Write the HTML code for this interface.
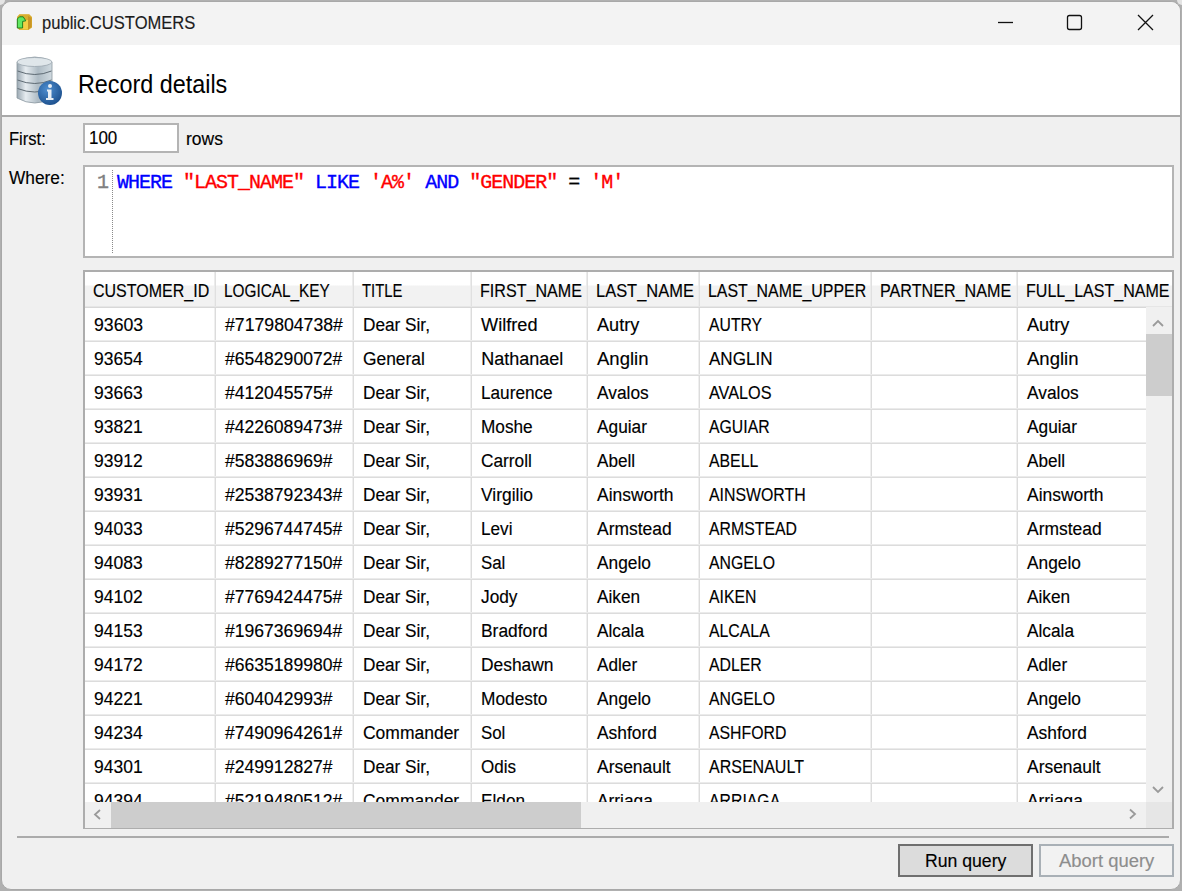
<!DOCTYPE html>
<html><head><meta charset="utf-8"><style>
html,body{margin:0;padding:0;width:1182px;height:891px;overflow:hidden;background:#b0b0b0;font-family:"Liberation Sans",sans-serif}
.r{position:absolute;box-sizing:content-box}
.t{position:absolute;white-space:pre;transform-origin:0 0;font-family:"Liberation Sans",sans-serif;-webkit-text-stroke:0.15px currentColor}
.mono{font-family:"Liberation Mono",monospace;font-size:20px;line-height:20px;letter-spacing:-1px;-webkit-text-stroke:0.35px currentColor}
#win{position:absolute;left:1px;top:1px;width:1178px;height:887px;border:1px solid #a8a8a8;border-radius:10px;background:#f0f0f0}
</style></head><body>
<div class="r" style="left:0;top:0;width:5px;height:5px;background:#e4e4e4;border-bottom-right-radius:5px"></div>
<div class="r" style="left:1177px;top:0;width:5px;height:5px;background:#e4e4e4;border-bottom-left-radius:5px"></div>
<div id="win"></div>
<div class="r" style="left:2px;top:2px;width:1178px;height:43px;background:#f3f3f3;border-radius:9px 9px 0 0"></div>
<div class="r" style="left:2px;top:45px;width:1178px;height:70px;background:#fff"></div>
<div class="r" style="left:2px;top:115px;width:1178px;height:2px;background:#a9a9a9"></div>
<div class="t" style="left:42px;top:14px;font-size:18px;line-height:18px;transform:scaleX(0.9200);color:#1b1b1b;">public.CUSTOMERS</div>
<svg class="r" style="left:990px;top:5px" width="180" height="35" viewBox="990 5 180 35"><line x1="998" y1="22.5" x2="1013" y2="22.5" stroke="#111" stroke-width="1.3"/><rect x="1067.5" y="15.5" width="14" height="14" rx="2" fill="none" stroke="#111" stroke-width="1.3"/><path d="M1138 15 L1153 30 M1153 15 L1138 30" stroke="#111" stroke-width="1.3"/></svg>
<svg class="r" style="left:0px;top:0px" width="40" height="40" viewBox="0 0 40 40"><path d="M19.5 14 L29 14 L32 17 L32 27.5 L28.5 30 L19.5 30 L17 27.5 L17 17 Z" fill="#d9ad2e"/><path d="M22 20 L28 20 L28 29.5 L20 29.5 Z" fill="#f3cf45"/><path d="M28 16 L31.5 18 L31.5 27 L28 29.5 Z" fill="#c99524"/><path d="M17.3 19 L19.5 16.8 L23.2 16.8 L25.8 20.8 L22.6 21.4 L22.6 28 L17.3 28 Z" fill="#62e862" stroke="#16761a" stroke-width="0.9" stroke-linejoin="miter"/><path d="M19.5 14.6 L28.5 14.6" stroke="#f0d890" stroke-width="0.8" stroke-dasharray="1 1"/></svg>
<svg class="r" style="left:14px;top:55px" width="52" height="52" viewBox="14 55 52 52">
<defs><linearGradient id="cyl" x1="0" x2="1" y1="0" y2="0">
<stop offset="0" stop-color="#9aa8b2"/><stop offset="0.25" stop-color="#e6ecf0"/><stop offset="0.6" stop-color="#aebbc4"/><stop offset="1" stop-color="#d0dae0"/></linearGradient>
<radialGradient id="info" cx="0.4" cy="0.35" r="0.7"><stop offset="0" stop-color="#4e8ed0"/><stop offset="1" stop-color="#1c4f8c"/></radialGradient></defs>
<path d="M17 62 Q35 52 52 62 L52 98 Q35 108 17 98 Z" fill="url(#cyl)" stroke="#8a97a0" stroke-width="0.8"/>
<ellipse cx="34.5" cy="62" rx="17.5" ry="4.5" fill="#dfe6ea" stroke="#9aa6ae" stroke-width="0.8"/>
<path d="M17.5 71 Q35 78 51.5 71" fill="none" stroke="#5f6b74" stroke-width="1"/>
<path d="M17.5 80 Q35 87 51.5 80" fill="none" stroke="#5f6b74" stroke-width="1"/>
<path d="M17.5 88.5 Q35 95.5 51.5 88.5" fill="none" stroke="#5f6b74" stroke-width="1"/>
<circle cx="50" cy="93" r="12" fill="url(#info)"/>
<circle cx="50" cy="86" r="2" fill="#e8eef4"/>
<path d="M47 89.5 H51.5 V98 H53.5 V100 H46 V98 H48 V91.5 H47 Z" fill="#e8eef4"/>
</svg>
<div class="t" style="left:77.5px;top:72px;font-size:25px;line-height:25px;transform:scaleX(0.9342);color:#000;-webkit-text-stroke:0">Record details</div>
<div class="t" style="left:9px;top:130px;font-size:18px;line-height:18px;transform:scaleX(0.9188);color:#000;">First:</div>
<div class="r" style="left:83px;top:123px;width:92px;height:26px;border:2px solid #b4b4b4;background:#fff"></div>
<div class="t" style="left:89px;top:129px;font-size:18px;line-height:18px;transform:scaleX(0.9414);color:#000;">100</div>
<div class="t" style="left:186px;top:130px;font-size:18px;line-height:18px;transform:scaleX(0.9703);color:#000;">rows</div>
<div class="t" style="left:9px;top:169px;font-size:18px;line-height:18px;transform:scaleX(0.9605);color:#000;">Where:</div>
<div class="r" style="left:83px;top:165px;width:1087px;height:89px;border:2px solid #b4b4b4;background:#fff"></div>
<div class="r" style="left:112px;top:170px;width:0;height:83px;border-left:1px dotted #8a8a8a"></div>
<div class="t mono" style="left:97px;top:173px;color:#808080">1</div>
<div class="t mono" style="left:117px;top:173px"><span style="color:#0000ff">WHERE</span><span style="color:#000">&nbsp;</span><span style="color:#ff0000">"LAST_NAME"</span><span style="color:#000">&nbsp;</span><span style="color:#0000ff">LIKE</span><span style="color:#000">&nbsp;</span><span style="color:#ff0000">'A%'</span><span style="color:#000">&nbsp;</span><span style="color:#0000ff">AND</span><span style="color:#000">&nbsp;</span><span style="color:#ff0000">"GENDER"</span><span style="color:#000">&nbsp;</span><span style="color:#000">=</span><span style="color:#000">&nbsp;</span><span style="color:#ff0000">'M'</span></div>
<div class="r" style="left:83px;top:270px;width:1087px;height:555px;border:2px solid #adadad;background:#fff;overflow:hidden"></div>
<div class="r" style="left:85px;top:272px;width:1087px;height:34px;background:linear-gradient(#ffffff 0,#ffffff 13px,#f2f2f2 14px,#f2f2f2 100%)"></div>
<div class="r" style="left:85px;top:306px;width:1087px;height:1px;background:#e6e6e6"></div>
<div class="r" style="left:85px;top:307px;width:1087px;height:1px;background:#d8d8d8"></div>
<div class="r" style="left:214px;top:272px;width:1px;height:34px;background:#ececec"></div>
<div class="r" style="left:215px;top:272px;width:1px;height:34px;background:#e0e0e0"></div>
<div class="r" style="left:214px;top:308px;width:1px;height:494px;background:#efefef"></div>
<div class="r" style="left:215px;top:308px;width:1px;height:494px;background:#dcdcdc"></div>
<div class="r" style="left:352px;top:272px;width:1px;height:34px;background:#ececec"></div>
<div class="r" style="left:353px;top:272px;width:1px;height:34px;background:#e0e0e0"></div>
<div class="r" style="left:352px;top:308px;width:1px;height:494px;background:#efefef"></div>
<div class="r" style="left:353px;top:308px;width:1px;height:494px;background:#dcdcdc"></div>
<div class="r" style="left:470px;top:272px;width:1px;height:34px;background:#ececec"></div>
<div class="r" style="left:471px;top:272px;width:1px;height:34px;background:#e0e0e0"></div>
<div class="r" style="left:470px;top:308px;width:1px;height:494px;background:#efefef"></div>
<div class="r" style="left:471px;top:308px;width:1px;height:494px;background:#dcdcdc"></div>
<div class="r" style="left:586px;top:272px;width:1px;height:34px;background:#ececec"></div>
<div class="r" style="left:587px;top:272px;width:1px;height:34px;background:#e0e0e0"></div>
<div class="r" style="left:586px;top:308px;width:1px;height:494px;background:#efefef"></div>
<div class="r" style="left:587px;top:308px;width:1px;height:494px;background:#dcdcdc"></div>
<div class="r" style="left:698px;top:272px;width:1px;height:34px;background:#ececec"></div>
<div class="r" style="left:699px;top:272px;width:1px;height:34px;background:#e0e0e0"></div>
<div class="r" style="left:698px;top:308px;width:1px;height:494px;background:#efefef"></div>
<div class="r" style="left:699px;top:308px;width:1px;height:494px;background:#dcdcdc"></div>
<div class="r" style="left:870px;top:272px;width:1px;height:34px;background:#ececec"></div>
<div class="r" style="left:871px;top:272px;width:1px;height:34px;background:#e0e0e0"></div>
<div class="r" style="left:870px;top:308px;width:1px;height:494px;background:#efefef"></div>
<div class="r" style="left:871px;top:308px;width:1px;height:494px;background:#dcdcdc"></div>
<div class="r" style="left:1016px;top:272px;width:1px;height:34px;background:#ececec"></div>
<div class="r" style="left:1017px;top:272px;width:1px;height:34px;background:#e0e0e0"></div>
<div class="r" style="left:1016px;top:308px;width:1px;height:494px;background:#efefef"></div>
<div class="r" style="left:1017px;top:308px;width:1px;height:494px;background:#dcdcdc"></div>
<div class="r" style="left:85px;top:340px;width:1061px;height:1px;background:#ebebeb"></div>
<div class="r" style="left:85px;top:341px;width:1061px;height:1px;background:#dcdcdc"></div>
<div class="r" style="left:85px;top:374px;width:1061px;height:1px;background:#ebebeb"></div>
<div class="r" style="left:85px;top:375px;width:1061px;height:1px;background:#dcdcdc"></div>
<div class="r" style="left:85px;top:408px;width:1061px;height:1px;background:#ebebeb"></div>
<div class="r" style="left:85px;top:409px;width:1061px;height:1px;background:#dcdcdc"></div>
<div class="r" style="left:85px;top:442px;width:1061px;height:1px;background:#ebebeb"></div>
<div class="r" style="left:85px;top:443px;width:1061px;height:1px;background:#dcdcdc"></div>
<div class="r" style="left:85px;top:476px;width:1061px;height:1px;background:#ebebeb"></div>
<div class="r" style="left:85px;top:477px;width:1061px;height:1px;background:#dcdcdc"></div>
<div class="r" style="left:85px;top:510px;width:1061px;height:1px;background:#ebebeb"></div>
<div class="r" style="left:85px;top:511px;width:1061px;height:1px;background:#dcdcdc"></div>
<div class="r" style="left:85px;top:544px;width:1061px;height:1px;background:#ebebeb"></div>
<div class="r" style="left:85px;top:545px;width:1061px;height:1px;background:#dcdcdc"></div>
<div class="r" style="left:85px;top:578px;width:1061px;height:1px;background:#ebebeb"></div>
<div class="r" style="left:85px;top:579px;width:1061px;height:1px;background:#dcdcdc"></div>
<div class="r" style="left:85px;top:612px;width:1061px;height:1px;background:#ebebeb"></div>
<div class="r" style="left:85px;top:613px;width:1061px;height:1px;background:#dcdcdc"></div>
<div class="r" style="left:85px;top:646px;width:1061px;height:1px;background:#ebebeb"></div>
<div class="r" style="left:85px;top:647px;width:1061px;height:1px;background:#dcdcdc"></div>
<div class="r" style="left:85px;top:680px;width:1061px;height:1px;background:#ebebeb"></div>
<div class="r" style="left:85px;top:681px;width:1061px;height:1px;background:#dcdcdc"></div>
<div class="r" style="left:85px;top:714px;width:1061px;height:1px;background:#ebebeb"></div>
<div class="r" style="left:85px;top:715px;width:1061px;height:1px;background:#dcdcdc"></div>
<div class="r" style="left:85px;top:748px;width:1061px;height:1px;background:#ebebeb"></div>
<div class="r" style="left:85px;top:749px;width:1061px;height:1px;background:#dcdcdc"></div>
<div class="r" style="left:85px;top:782px;width:1061px;height:1px;background:#ebebeb"></div>
<div class="r" style="left:85px;top:783px;width:1061px;height:1px;background:#dcdcdc"></div>
<div class="r" style="left:85px;top:272px;width:1087px;height:34px;overflow:hidden">
<div class="t" style="left:8px;top:10px;font-size:18px;line-height:18px;transform:scaleX(0.8891);color:#000;">CUSTOMER_ID</div>
<div class="t" style="left:139px;top:10px;font-size:18px;line-height:18px;transform:scaleX(0.8528);color:#000;">LOGICAL_KEY</div>
<div class="t" style="left:277px;top:10px;font-size:18px;line-height:18px;transform:scaleX(0.8250);color:#000;">TITLE</div>
<div class="t" style="left:395px;top:10px;font-size:18px;line-height:18px;transform:scaleX(0.8946);color:#000;">FIRST_NAME</div>
<div class="t" style="left:511px;top:10px;font-size:18px;line-height:18px;transform:scaleX(0.9143);color:#000;">LAST_NAME</div>
<div class="t" style="left:623px;top:10px;font-size:18px;line-height:18px;transform:scaleX(0.8831);color:#000;">LAST_NAME_UPPER</div>
<div class="t" style="left:795px;top:10px;font-size:18px;line-height:18px;transform:scaleX(0.8966);color:#000;">PARTNER_NAME</div>
<div class="t" style="left:941px;top:10px;font-size:18px;line-height:18px;transform:scaleX(0.8912);color:#000;">FULL_LAST_NAME</div>
</div>
<div class="r" style="left:85px;top:307px;width:1061px;height:495px;overflow:hidden">
<div class="t" style="left:8.5px;top:9px;font-size:18px;line-height:18px;transform:scaleX(0.9813);color:#000;">93603</div>
<div class="t" style="left:140.2px;top:9px;font-size:18px;line-height:18px;transform:scaleX(0.9817);color:#000;">#7179804738#</div>
<div class="t" style="left:278.2px;top:9px;font-size:18px;line-height:18px;transform:scaleX(0.9559);color:#000;">Dear Sir,</div>
<div class="t" style="left:396.2px;top:9px;font-size:18px;line-height:18px;transform:scaleX(1.0091);color:#000;">Wilfred</div>
<div class="t" style="left:512.2px;top:9px;font-size:18px;line-height:18px;transform:scaleX(1.0071);color:#000;">Autry</div>
<div class="t" style="left:624.2px;top:9px;font-size:18px;line-height:18px;transform:scaleX(0.8750);color:#000;">AUTRY</div>
<div class="t" style="left:942.2px;top:9px;font-size:18px;line-height:18px;transform:scaleX(1.0071);color:#000;">Autry</div>
<div class="t" style="left:8.5px;top:43px;font-size:18px;line-height:18px;transform:scaleX(0.9710);color:#000;">93654</div>
<div class="t" style="left:140.2px;top:43px;font-size:18px;line-height:18px;transform:scaleX(0.9758);color:#000;">#6548290072#</div>
<div class="t" style="left:278.2px;top:43px;font-size:18px;line-height:18px;transform:scaleX(0.9661);color:#000;">General</div>
<div class="t" style="left:396.2px;top:43px;font-size:18px;line-height:18px;transform:scaleX(1.0000);color:#000;">Nathanael</div>
<div class="t" style="left:512.2px;top:43px;font-size:18px;line-height:18px;transform:scaleX(1.0286);color:#000;">Anglin</div>
<div class="t" style="left:624.2px;top:43px;font-size:18px;line-height:18px;transform:scaleX(0.9470);color:#000;">ANGLIN</div>
<div class="t" style="left:942.2px;top:43px;font-size:18px;line-height:18px;transform:scaleX(1.0286);color:#000;">Anglin</div>
<div class="t" style="left:8.5px;top:77px;font-size:18px;line-height:18px;transform:scaleX(0.9710);color:#000;">93663</div>
<div class="t" style="left:140.2px;top:77px;font-size:18px;line-height:18px;transform:scaleX(0.9763);color:#000;">#412045575#</div>
<div class="t" style="left:278.2px;top:77px;font-size:18px;line-height:18px;transform:scaleX(0.9559);color:#000;">Dear Sir,</div>
<div class="t" style="left:396.2px;top:77px;font-size:18px;line-height:18px;transform:scaleX(0.9548);color:#000;">Laurence</div>
<div class="t" style="left:512.2px;top:77px;font-size:18px;line-height:18px;transform:scaleX(0.9623);color:#000;">Avalos</div>
<div class="t" style="left:624.2px;top:77px;font-size:18px;line-height:18px;transform:scaleX(0.9014);color:#000;">AVALOS</div>
<div class="t" style="left:942.2px;top:77px;font-size:18px;line-height:18px;transform:scaleX(0.9623);color:#000;">Avalos</div>
<div class="t" style="left:8.5px;top:111px;font-size:18px;line-height:18px;transform:scaleX(0.9710);color:#000;">93821</div>
<div class="t" style="left:140.2px;top:111px;font-size:18px;line-height:18px;transform:scaleX(0.9758);color:#000;">#4226089473#</div>
<div class="t" style="left:278.2px;top:111px;font-size:18px;line-height:18px;transform:scaleX(0.9559);color:#000;">Dear Sir,</div>
<div class="t" style="left:396.2px;top:111px;font-size:18px;line-height:18px;transform:scaleX(0.9556);color:#000;">Moshe</div>
<div class="t" style="left:512.2px;top:111px;font-size:18px;line-height:18px;transform:scaleX(0.9606);color:#000;">Aguiar</div>
<div class="t" style="left:624.2px;top:111px;font-size:18px;line-height:18px;transform:scaleX(0.8790);color:#000;">AGUIAR</div>
<div class="t" style="left:942.2px;top:111px;font-size:18px;line-height:18px;transform:scaleX(0.9606);color:#000;">Aguiar</div>
<div class="t" style="left:8.5px;top:145px;font-size:18px;line-height:18px;transform:scaleX(0.9710);color:#000;">93912</div>
<div class="t" style="left:140.2px;top:145px;font-size:18px;line-height:18px;transform:scaleX(0.9763);color:#000;">#583886969#</div>
<div class="t" style="left:278.2px;top:145px;font-size:18px;line-height:18px;transform:scaleX(0.9559);color:#000;">Dear Sir,</div>
<div class="t" style="left:396.2px;top:145px;font-size:18px;line-height:18px;transform:scaleX(0.9590);color:#000;">Carroll</div>
<div class="t" style="left:512.2px;top:145px;font-size:18px;line-height:18px;transform:scaleX(0.9532);color:#000;">Abell</div>
<div class="t" style="left:624.2px;top:145px;font-size:18px;line-height:18px;transform:scaleX(0.8790);color:#000;">ABELL</div>
<div class="t" style="left:942.2px;top:145px;font-size:18px;line-height:18px;transform:scaleX(0.9532);color:#000;">Abell</div>
<div class="t" style="left:8.5px;top:179px;font-size:18px;line-height:18px;transform:scaleX(0.9710);color:#000;">93931</div>
<div class="t" style="left:140.2px;top:179px;font-size:18px;line-height:18px;transform:scaleX(0.9758);color:#000;">#2538792343#</div>
<div class="t" style="left:278.2px;top:179px;font-size:18px;line-height:18px;transform:scaleX(0.9559);color:#000;">Dear Sir,</div>
<div class="t" style="left:396.2px;top:179px;font-size:18px;line-height:18px;transform:scaleX(0.9673);color:#000;">Virgilio</div>
<div class="t" style="left:512.2px;top:179px;font-size:18px;line-height:18px;transform:scaleX(0.9689);color:#000;">Ainsworth</div>
<div class="t" style="left:624.2px;top:179px;font-size:18px;line-height:18px;transform:scaleX(0.8816);color:#000;">AINSWORTH</div>
<div class="t" style="left:942.2px;top:179px;font-size:18px;line-height:18px;transform:scaleX(0.9689);color:#000;">Ainsworth</div>
<div class="t" style="left:8.5px;top:213px;font-size:18px;line-height:18px;transform:scaleX(0.9710);color:#000;">94033</div>
<div class="t" style="left:140.2px;top:213px;font-size:18px;line-height:18px;transform:scaleX(0.9758);color:#000;">#5296744745#</div>
<div class="t" style="left:278.2px;top:213px;font-size:18px;line-height:18px;transform:scaleX(0.9559);color:#000;">Dear Sir,</div>
<div class="t" style="left:396.2px;top:213px;font-size:18px;line-height:18px;transform:scaleX(0.9529);color:#000;">Levi</div>
<div class="t" style="left:512.2px;top:213px;font-size:18px;line-height:18px;transform:scaleX(0.9685);color:#000;">Armstead</div>
<div class="t" style="left:624.2px;top:213px;font-size:18px;line-height:18px;transform:scaleX(0.8790);color:#000;">ARMSTEAD</div>
<div class="t" style="left:942.2px;top:213px;font-size:18px;line-height:18px;transform:scaleX(0.9685);color:#000;">Armstead</div>
<div class="t" style="left:8.5px;top:247px;font-size:18px;line-height:18px;transform:scaleX(0.9710);color:#000;">94083</div>
<div class="t" style="left:140.2px;top:247px;font-size:18px;line-height:18px;transform:scaleX(0.9758);color:#000;">#8289277150#</div>
<div class="t" style="left:278.2px;top:247px;font-size:18px;line-height:18px;transform:scaleX(0.9559);color:#000;">Dear Sir,</div>
<div class="t" style="left:396.2px;top:247px;font-size:18px;line-height:18px;transform:scaleX(0.9361);color:#000;">Sal</div>
<div class="t" style="left:512.2px;top:247px;font-size:18px;line-height:18px;transform:scaleX(0.9623);color:#000;">Angelo</div>
<div class="t" style="left:624.2px;top:247px;font-size:18px;line-height:18px;transform:scaleX(0.8790);color:#000;">ANGELO</div>
<div class="t" style="left:942.2px;top:247px;font-size:18px;line-height:18px;transform:scaleX(0.9623);color:#000;">Angelo</div>
<div class="t" style="left:8.5px;top:281px;font-size:18px;line-height:18px;transform:scaleX(0.9710);color:#000;">94102</div>
<div class="t" style="left:140.2px;top:281px;font-size:18px;line-height:18px;transform:scaleX(0.9758);color:#000;">#7769424475#</div>
<div class="t" style="left:278.2px;top:281px;font-size:18px;line-height:18px;transform:scaleX(0.9559);color:#000;">Dear Sir,</div>
<div class="t" style="left:396.2px;top:281px;font-size:18px;line-height:18px;transform:scaleX(0.9599);color:#000;">Jody</div>
<div class="t" style="left:512.2px;top:281px;font-size:18px;line-height:18px;transform:scaleX(0.9568);color:#000;">Aiken</div>
<div class="t" style="left:624.2px;top:281px;font-size:18px;line-height:18px;transform:scaleX(0.8790);color:#000;">AIKEN</div>
<div class="t" style="left:942.2px;top:281px;font-size:18px;line-height:18px;transform:scaleX(0.9568);color:#000;">Aiken</div>
<div class="t" style="left:8.5px;top:315px;font-size:18px;line-height:18px;transform:scaleX(0.9710);color:#000;">94153</div>
<div class="t" style="left:140.2px;top:315px;font-size:18px;line-height:18px;transform:scaleX(0.9758);color:#000;">#1967369694#</div>
<div class="t" style="left:278.2px;top:315px;font-size:18px;line-height:18px;transform:scaleX(0.9559);color:#000;">Dear Sir,</div>
<div class="t" style="left:396.2px;top:315px;font-size:18px;line-height:18px;transform:scaleX(0.9666);color:#000;">Bradford</div>
<div class="t" style="left:512.2px;top:315px;font-size:18px;line-height:18px;transform:scaleX(0.9591);color:#000;">Alcala</div>
<div class="t" style="left:624.2px;top:315px;font-size:18px;line-height:18px;transform:scaleX(0.8790);color:#000;">ALCALA</div>
<div class="t" style="left:942.2px;top:315px;font-size:18px;line-height:18px;transform:scaleX(0.9591);color:#000;">Alcala</div>
<div class="t" style="left:8.5px;top:349px;font-size:18px;line-height:18px;transform:scaleX(0.9710);color:#000;">94172</div>
<div class="t" style="left:140.2px;top:349px;font-size:18px;line-height:18px;transform:scaleX(0.9758);color:#000;">#6635189980#</div>
<div class="t" style="left:278.2px;top:349px;font-size:18px;line-height:18px;transform:scaleX(0.9559);color:#000;">Dear Sir,</div>
<div class="t" style="left:396.2px;top:349px;font-size:18px;line-height:18px;transform:scaleX(0.9666);color:#000;">Deshawn</div>
<div class="t" style="left:512.2px;top:349px;font-size:18px;line-height:18px;transform:scaleX(0.9547);color:#000;">Adler</div>
<div class="t" style="left:624.2px;top:349px;font-size:18px;line-height:18px;transform:scaleX(0.8790);color:#000;">ADLER</div>
<div class="t" style="left:942.2px;top:349px;font-size:18px;line-height:18px;transform:scaleX(0.9547);color:#000;">Adler</div>
<div class="t" style="left:8.5px;top:383px;font-size:18px;line-height:18px;transform:scaleX(0.9710);color:#000;">94221</div>
<div class="t" style="left:140.2px;top:383px;font-size:18px;line-height:18px;transform:scaleX(0.9763);color:#000;">#604042993#</div>
<div class="t" style="left:278.2px;top:383px;font-size:18px;line-height:18px;transform:scaleX(0.9559);color:#000;">Dear Sir,</div>
<div class="t" style="left:396.2px;top:383px;font-size:18px;line-height:18px;transform:scaleX(0.9620);color:#000;">Modesto</div>
<div class="t" style="left:512.2px;top:383px;font-size:18px;line-height:18px;transform:scaleX(0.9623);color:#000;">Angelo</div>
<div class="t" style="left:624.2px;top:383px;font-size:18px;line-height:18px;transform:scaleX(0.8790);color:#000;">ANGELO</div>
<div class="t" style="left:942.2px;top:383px;font-size:18px;line-height:18px;transform:scaleX(0.9623);color:#000;">Angelo</div>
<div class="t" style="left:8.5px;top:417px;font-size:18px;line-height:18px;transform:scaleX(0.9710);color:#000;">94234</div>
<div class="t" style="left:140.2px;top:417px;font-size:18px;line-height:18px;transform:scaleX(0.9758);color:#000;">#7490964261#</div>
<div class="t" style="left:278.2px;top:417px;font-size:18px;line-height:18px;transform:scaleX(0.9711);color:#000;">Commander</div>
<div class="t" style="left:396.2px;top:417px;font-size:18px;line-height:18px;transform:scaleX(0.9361);color:#000;">Sol</div>
<div class="t" style="left:512.2px;top:417px;font-size:18px;line-height:18px;transform:scaleX(0.9645);color:#000;">Ashford</div>
<div class="t" style="left:624.2px;top:417px;font-size:18px;line-height:18px;transform:scaleX(0.8790);color:#000;">ASHFORD</div>
<div class="t" style="left:942.2px;top:417px;font-size:18px;line-height:18px;transform:scaleX(0.9645);color:#000;">Ashford</div>
<div class="t" style="left:8.5px;top:451px;font-size:18px;line-height:18px;transform:scaleX(0.9710);color:#000;">94301</div>
<div class="t" style="left:140.2px;top:451px;font-size:18px;line-height:18px;transform:scaleX(0.9763);color:#000;">#249912827#</div>
<div class="t" style="left:278.2px;top:451px;font-size:18px;line-height:18px;transform:scaleX(0.9559);color:#000;">Dear Sir,</div>
<div class="t" style="left:396.2px;top:451px;font-size:18px;line-height:18px;transform:scaleX(0.9449);color:#000;">Odis</div>
<div class="t" style="left:512.2px;top:451px;font-size:18px;line-height:18px;transform:scaleX(0.9683);color:#000;">Arsenault</div>
<div class="t" style="left:624.2px;top:451px;font-size:18px;line-height:18px;transform:scaleX(0.8899);color:#000;">ARSENAULT</div>
<div class="t" style="left:942.2px;top:451px;font-size:18px;line-height:18px;transform:scaleX(0.9683);color:#000;">Arsenault</div>
<div class="t" style="left:8.5px;top:485px;font-size:18px;line-height:18px;transform:scaleX(0.9710);color:#000;">94394</div>
<div class="t" style="left:140.2px;top:485px;font-size:18px;line-height:18px;transform:scaleX(0.9758);color:#000;">#5219480512#</div>
<div class="t" style="left:278.2px;top:485px;font-size:18px;line-height:18px;transform:scaleX(0.9711);color:#000;">Commander</div>
<div class="t" style="left:396.2px;top:485px;font-size:18px;line-height:18px;transform:scaleX(0.9574);color:#000;">Eldon</div>
<div class="t" style="left:512.2px;top:485px;font-size:18px;line-height:18px;transform:scaleX(0.9631);color:#000;">Arriaga</div>
<div class="t" style="left:624.2px;top:485px;font-size:18px;line-height:18px;transform:scaleX(0.8790);color:#000;">ARRIAGA</div>
<div class="t" style="left:942.2px;top:485px;font-size:18px;line-height:18px;transform:scaleX(0.9631);color:#000;">Arriaga</div>
</div>
<div class="r" style="left:1146px;top:307px;width:26px;height:495px;background:#f0f0f0"></div>
<div class="r" style="left:1146px;top:334px;width:26px;height:62px;background:#cdcdcd"></div>
<svg class="r" style="left:1146px;top:307px" width="26" height="495"><path d="M1153 19 L1158 14 L1163 19" transform="translate(-1146,0)" fill="none" stroke="#9a9a9a" stroke-width="1.8"/><path d="M7 480 L12 485 L17 480" fill="none" stroke="#9a9a9a" stroke-width="1.8"/></svg>
<div class="r" style="left:85px;top:802px;width:1061px;height:26px;background:#f0f0f0"></div>
<div class="r" style="left:111px;top:802px;width:470px;height:26px;background:#cdcdcd"></div>
<div class="r" style="left:1146px;top:802px;width:26px;height:26px;background:#e6e6e6"></div>
<svg class="r" style="left:85px;top:802px" width="1061" height="26"><path d="M15 8 L10 12.5 L15 17" fill="none" stroke="#9a9a9a" stroke-width="1.8"/><path d="M1045 7.5 L1050 12 L1045 16.5" fill="none" stroke="#9a9a9a" stroke-width="1.8"/></svg>
<div class="r" style="left:17px;top:836px;width:1152px;height:2px;background:#ababab"></div>
<div class="r" style="left:898px;top:844px;width:131px;height:29px;border:2px solid #6f6f6f;background:#dcdcdc"></div>
<div class="t" style="left:925px;top:852px;font-size:18px;line-height:18px;transform:scaleX(0.9793);color:#000;">Run query</div>
<div class="r" style="left:1039px;top:844px;width:131px;height:29px;border:2px solid #a9b0b6;background:#f2f2f2"></div>
<div class="t" style="left:1059px;top:852px;font-size:18px;line-height:18px;transform:scaleX(1.0237);color:#8d8d8d;">Abort query</div>
</body></html>
